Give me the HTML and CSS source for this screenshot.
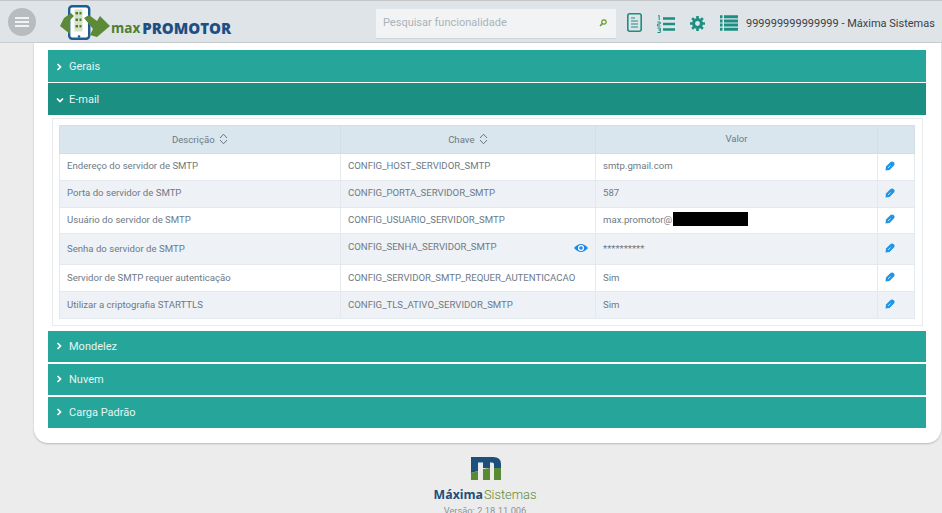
FILE: index.html
```html
<!DOCTYPE html>
<html lang="pt-BR">
<head>
<meta charset="utf-8">
<title>maxPromotor</title>
<link rel="stylesheet" href="styles.css">
</head>
<body>
<header class="topbar">
  <button class="menu-btn" aria-label="Menu"><span></span><span></span><span></span></button>
  <div class="logo">
    <svg class="logo-mark" width="51" height="36" viewBox="0 0 51 36">
      <rect x="9.200" y="1.200" width="20" height="32.600" rx="3" fill="#fff" stroke="#1d5f92" stroke-width="2.400"/>
      <circle cx="19" cy="31.500" r="1.300" fill="#1d5f92"/>
      <rect x="14.500" y="4.500" width="8" height="22" fill="#d5e4c8"/>
      <path d="M15.500 7h2.500v2.500h-2.500zM19.500 7h2v2.500h-2zM15.500 13.500h2.500v2.500h-2.500zM19.500 13.500h2v2.500h-2zM15.500 20h2.500v2.500h-2.500zM19.500 20h2v2.500h-2z" fill="#4f7f2d"/>
      <path d="M0 21 L4 13 L11 8 L14 11 L10 15 L10 29 Z" fill="#5c8a37"/>
      <path d="M24 13 L29 10 L37 16 L40 11 L50 21 L37 32 L30 30 L33 24 Z" fill="#5c8a37"/>
    </svg>
    <span class="logo-max">max</span><span class="logo-promotor">PROMOTOR</span>
  </div>
  <div class="search">
    <span class="search-text">Pesquisar funcionalidade</span>
    <svg width="8" height="8" viewBox="0 0 8 8"><circle cx="5" cy="3" r="2.200" fill="none" stroke="#5c9a1f" stroke-width="1.200"/><path d="M3.400 4.600 L1 7" stroke="#5c9a1f" stroke-width="1.400"/></svg>
  </div>
  <nav class="tools">
    <svg class="t-doc" width="15" height="19" viewBox="0 0 15 19"><rect x="0.800" y="0.800" width="13.400" height="17.400" rx="2" fill="none" stroke="#1a8f82" stroke-width="1.600"/><path d="M4 5h4M4 8h7M4 11h7M4 14h7" stroke="#1a8f82" stroke-width="1.200"/></svg>
    <svg class="t-list" width="18" height="18" viewBox="0 0 18 18"><path d="M6 3.500h12M6 9h12M6 14.500h12" stroke="#1a8f82" stroke-width="2.700"/><path d="M1 1l1.200-.5V5M0.400 7h2.800v2H0.600v2h2.800M0.500 13h2.800v2h-2M3.300 15v2.500H0.500" fill="none" stroke="#1a8f82" stroke-width="1"/></svg>
    <svg class="t-gear" width="15" height="15" viewBox="0 0 16 16"><circle cx="8" cy="8" r="4.200" fill="none" stroke="#1a8f82" stroke-width="3.200"/><path d="M8 0v3M8 13v3M0 8h3M13 8h3M2.300 2.300l2.200 2.200M11.500 11.500l2.200 2.200M13.700 2.300l-2.200 2.200M4.500 11.500l-2.200 2.200" stroke="#1a8f82" stroke-width="2.800"/></svg>
    <svg class="t-table" width="18" height="16" viewBox="0 0 18 16"><path d="M0 1.700h2.500M4 1.700h14M0 5.900h2.500M4 5.900h14M0 10.100h2.500M4 10.100h14M0 14.300h2.500M4 14.300h14" stroke="#1a8f82" stroke-width="3"/></svg>
  </nav>
  <span class="user">999999999999999 - Máxima Sistemas</span>
</header>

<main class="card">
  <section class="panel">
    <div class="panel-head top"><svg class="chev" width="6" height="8" viewBox="0 0 6 8"><path d="M1.500 1 L4.500 4 L1.500 7" fill="none" stroke="#fff" stroke-width="1.700"/></svg>Gerais</div>
  </section>
  <section class="panel">
    <div class="panel-head top active"><svg class="chev-down" width="8" height="6" viewBox="0 0 8 6"><path d="M1 1.500 L4 4.500 L7 1.500" fill="none" stroke="#fff" stroke-width="1.700"/></svg>E-mail</div>
    <div class="panel-body">
      <div class="table-wrap">
        <table class="grid">
          <colgroup><col class="c1"><col class="c2"><col class="c3"><col class="c4"></colgroup>
          <thead>
            <tr>
              <th>Descrição <svg class="sort" width="9" height="12" viewBox="0 0 9 12"><path d="M1 5 L4.500 1.200 L8 5 M1 7 L4.500 10.800 L8 7" fill="none" stroke="#66757f" stroke-width="1"/></svg></th>
              <th>Chave <svg class="sort" width="9" height="12" viewBox="0 0 9 12"><path d="M1 5 L4.500 1.200 L8 5 M1 7 L4.500 10.800 L8 7" fill="none" stroke="#66757f" stroke-width="1"/></svg></th>
              <th>Valor</th>
              <th></th>
            </tr>
          </thead>
          <tbody>
            <tr><td>Endereço do servidor de SMTP</td><td>CONFIG_HOST_SERVIDOR_SMTP</td><td>smtp.gmail.com</td><td class="act"><svg class="pen" width="10" height="10" viewBox="0 0 10 10"><path d="M0.500 9.500 L1 5.500 L5 1.500 Q7 -0.500 8.800 1.200 Q10.500 3 8.500 5 L4.500 9 Z" fill="#1e96e8"/><path d="M3 7 L5.500 4.500" stroke="#fff" stroke-width="0.700"/></svg></td></tr>
            <tr><td>Porta do servidor de SMTP</td><td>CONFIG_PORTA_SERVIDOR_SMTP</td><td>587</td><td class="act"><svg class="pen" width="10" height="10" viewBox="0 0 10 10"><path d="M0.500 9.500 L1 5.500 L5 1.500 Q7 -0.500 8.800 1.200 Q10.500 3 8.500 5 L4.500 9 Z" fill="#1e96e8"/><path d="M3 7 L5.500 4.500" stroke="#fff" stroke-width="0.700"/></svg></td></tr>
            <tr><td>Usuário do servidor de SMTP</td><td>CONFIG_USUARIO_SERVIDOR_SMTP</td><td><span class="mail">max.promotor@<span class="redact"></span></span></td><td class="act"><svg class="pen" width="10" height="10" viewBox="0 0 10 10"><path d="M0.500 9.500 L1 5.500 L5 1.500 Q7 -0.500 8.800 1.200 Q10.500 3 8.500 5 L4.500 9 Z" fill="#1e96e8"/><path d="M3 7 L5.500 4.500" stroke="#fff" stroke-width="0.700"/></svg></td></tr>
            <tr class="tall"><td>Senha do servidor de SMTP</td><td class="key-eye"><span class="key-up">CONFIG_SENHA_SERVIDOR_SMTP</span><svg class="eye" width="14" height="10" viewBox="0 0 14 10"><path d="M0 5 Q7 -3 14 5 Q7 13 0 5 Z" fill="#1e88e5"/><circle cx="7" cy="5" r="3" fill="#fff"/><circle cx="7" cy="5" r="1.800" fill="#1e88e5"/></svg></td><td>**********</td><td class="act"><svg class="pen" width="10" height="10" viewBox="0 0 10 10"><path d="M0.500 9.500 L1 5.500 L5 1.500 Q7 -0.500 8.800 1.200 Q10.500 3 8.500 5 L4.500 9 Z" fill="#1e96e8"/><path d="M3 7 L5.500 4.500" stroke="#fff" stroke-width="0.700"/></svg></td></tr>
            <tr><td>Servidor de SMTP requer autenticação</td><td>CONFIG_SERVIDOR_SMTP_REQUER_AUTENTICACAO</td><td>Sim</td><td class="act"><svg class="pen" width="10" height="10" viewBox="0 0 10 10"><path d="M0.500 9.500 L1 5.500 L5 1.500 Q7 -0.500 8.800 1.200 Q10.500 3 8.500 5 L4.500 9 Z" fill="#1e96e8"/><path d="M3 7 L5.500 4.500" stroke="#fff" stroke-width="0.700"/></svg></td></tr>
            <tr><td>Utilizar a criptografia STARTTLS</td><td>CONFIG_TLS_ATIVO_SERVIDOR_SMTP</td><td>Sim</td><td class="act"><svg class="pen" width="10" height="10" viewBox="0 0 10 10"><path d="M0.500 9.500 L1 5.500 L5 1.500 Q7 -0.500 8.800 1.200 Q10.500 3 8.500 5 L4.500 9 Z" fill="#1e96e8"/><path d="M3 7 L5.500 4.500" stroke="#fff" stroke-width="0.700"/></svg></td></tr>
          </tbody>
        </table>
      </div>
    </div>
  </section>
  <section class="panel">
    <div class="panel-head"><svg class="chev" width="6" height="8" viewBox="0 0 6 8"><path d="M1.500 1 L4.500 4 L1.500 7" fill="none" stroke="#fff" stroke-width="1.700"/></svg>Mondelez</div>
  </section>
  <section class="panel">
    <div class="panel-head"><svg class="chev" width="6" height="8" viewBox="0 0 6 8"><path d="M1.500 1 L4.500 4 L1.500 7" fill="none" stroke="#fff" stroke-width="1.700"/></svg>Nuvem</div>
  </section>
  <section class="panel">
    <div class="panel-head"><svg class="chev" width="6" height="8" viewBox="0 0 6 8"><path d="M1.500 1 L4.500 4 L1.500 7" fill="none" stroke="#fff" stroke-width="1.700"/></svg>Carga Padrão</div>
  </section>
</main>

<footer class="foot">
  <svg class="foot-mark" width="30" height="24" viewBox="0 0 30 24">
    <path d="M0 1 H22 Q30 1 30 8 V12 H23 V8 Q23 6.500 21 6.500 H19 V12 H12 V6.500 H7 V15 L0 17 Z" fill="#1d4f7c"/>
    <path d="M0 24 V17 L7 15 V24 Z M12 24 V13 L19 12 V24 Z M23 24 V12 L30 12 V24 Z" fill="#5b8a35"/>
  </svg>
  <div class="foot-name"><b>Máxima</b><span>Sistemas</span></div>
  <div class="foot-ver">Versão: 2.18.11.006</div>
</footer>
</body>
</html>
```

FILE: styles.css
```css
* { box-sizing: border-box; }
html, body { margin: 0; height: 513px; overflow: hidden; }
body { background: #ececec; font-family: Roboto, "Liberation Sans", sans-serif; color: #6d7a85; }

.topbar {
  height: 43px;
  background: #dfe4e8;
  border-top: 1px solid #c4c6c8;
  border-bottom: 1px solid #c9ccce;
  display: flex;
  align-items: center;
  padding-left: 8px;
}
.menu-btn {
  width: 28px; height: 28px; border-radius: 50%; flex: none;
  background: #b9bcbe; border: 0; padding: 0; margin-top: 1px;
  display: flex; flex-direction: column; align-items: center; justify-content: center; gap: 2.500px;
}
.menu-btn span { display: block; width: 14px; height: 1.500px; background: #f2f2f2; }
.logo { display: flex; align-items: flex-end; margin-left: 24px; height: 36px; width: 316px; flex: none; margin-top: 2px; }
.logo-mark { flex: none; margin-right: 0; }
.logo-max { font: 700 13.500px "Open Sans", sans-serif; color: #4f7f2d; line-height: 18px; margin-bottom: 4px; margin-left: 0; }
.logo-promotor { font: 800 15px "Open Sans", sans-serif; color: #1d4f85; line-height: 18px; margin-bottom: 4px; margin-left: 2px; }
.search {
  width: 240px; height: 30px; margin-top: 5px; flex: none;
  background: #f2f3f4;
  border-bottom: 1px solid #cfd4d8;
  display: flex; align-items: center; justify-content: space-between;
  padding: 0 9px 2px 7px;
}
.search-text { font-size: 11px; color: #a9b3ba; }
.tools { display: flex; align-items: center; margin-left: 11px; margin-top: 4px; gap: 15px; flex: none; }
.t-doc { margin-top: -3px; }
.t-table { margin-top: -2px; }
.user { font-size: 11px; color: #3a3f44; margin-left: 8px; margin-top: 4px; white-space: nowrap; }

.card {
  width: 907px; height: 400px;
  margin-left: 34px;
  background: #fff;
  border-radius: 0 0 14px 14px;
  box-shadow: 0 1px 2px #b8b8c0;
  padding: 7px 15px 0 14px;
}
.panel-head {
  height: 31.500px;
  margin-bottom: 1.500px;
  background: #26a69a;
  color: #e4f5f2;
  font-size: 11px;
  display: flex; align-items: center;
  padding-left: 8px;
}
.panel-head.top { padding-top: 1.500px; }
.panel-head.active { background: #1a8f82; }
.chev { margin-right: 7px; }
.chev-down { margin-right: 5px; }

.panel-body { padding: 2px 3px 0 4px; height: 214.500px; }
.table-wrap { border: 1px solid #e8eaec; padding: 6px 7px 6px 6px; height: 208px; }
.grid { width: 855px; border-collapse: collapse; table-layout: fixed; font-size: 9.600px; }
.c1 { width: 281px; } .c2 { width: 255px; } .c3 { width: 282px; } .c4 { width: 37px; }
.grid th {
  height: 28px; background: #d9e6ee; font-weight: 400; font-size: 9.600px; color: #6d7a85;
  border: 1px solid #d2dfe7; text-align: center; padding: 0 0 2px;
}
.grid td {
  height: 26.800px; padding: 0 7px 2px; border: 1px solid #e4e9ee; color: #6d7a85; white-space: nowrap;
}
.grid tbody tr:nth-child(even) td { background: #eef1f6; }
.grid tr.tall td { height: 31px; }
.sort { vertical-align: -2px; margin-left: 2px; }
.act { text-align: left; }
.pen { display: inline-block; vertical-align: middle; margin-top: -2px; }
.mail { display: inline-flex; align-items: center; }
.redact { display: inline-block; width: 75px; height: 14px; background: #000; margin-left: 1px; }
.key-eye { position: relative; }
.key-up { position: relative; top: -2px; }
.eye { position: absolute; right: 7px; top: 9px; }

.foot { display: flex; flex-direction: column; align-items: center; margin-top: 13px; margin-left: 28px; }
.foot-mark { display: block; margin-left: 1px; }
.foot-name { margin-top: 7px; line-height: 16px; display: flex; }
.foot-name b { font-weight: 700; color: #1d4f7c; font-family: "Open Sans", sans-serif; font-size: 12.300px; }
.foot-name span { color: #5b8a35; font-weight: 300; font-size: 12.800px; margin-left: 1px; }
.foot-ver { font-size: 9.300px; color: #8a939a; margin-top: 2px; }
```
